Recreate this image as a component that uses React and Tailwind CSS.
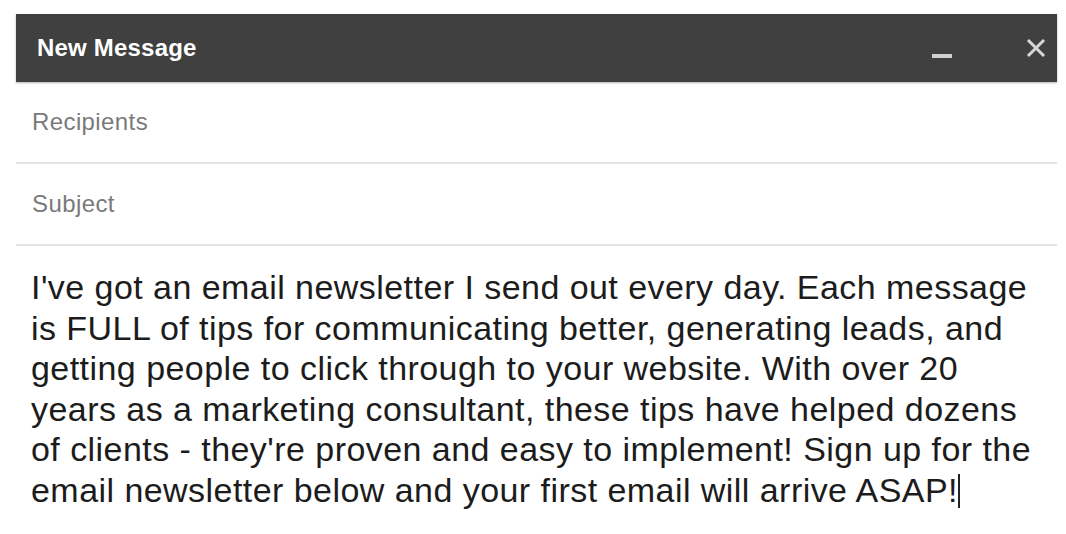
const lines = [
  "I've got an email newsletter I send out every day. Each message",
  "is FULL of tips for communicating better, generating leads, and",
  "getting people to click through to your website. With over 20",
  "years as a marketing consultant, these tips have helped dozens",
  "of clients - they're proven and easy to implement! Sign up for the",
  "email newsletter below and your first email will arrive ASAP!",
];

export default function App() {
  return (
    <div className="w-[1066px] h-[534px] bg-white pt-[14px] px-[16px] font-['Liberation_Sans',Arial,sans-serif] overflow-hidden">
      <div className="w-[1041px]">
        {/* title bar */}
        <div className="h-[68px] bg-[#404040] flex items-center pl-[21px] pr-[11px] shadow-[0_1px_2px_rgba(0,0,0,0.3)]">
          <span className="text-white font-bold text-[24px] tracking-[0.2px] flex-1">New Message</span>
          <div className="w-[20px] h-[4px] bg-[#d0d0d0] mt-[16px] mr-[74px]" />
          <svg width="20" height="20" viewBox="0 0 20 20">
            <path d="M3 3 L17 17 M17 3 L3 17" stroke="#d6d6d6" strokeWidth="3" strokeLinecap="square" />
          </svg>
        </div>

        <div className="h-[82px] flex items-center pl-[16px] border-b-2 border-[#e3e3e3]">
          <span className="text-[24px] tracking-[0.4px] text-[#7a7a7a]">Recipients</span>
        </div>
        <div className="h-[82px] flex items-center pl-[16px] border-b-2 border-[#e3e3e3]">
          <span className="text-[24px] tracking-[0.4px] text-[#7a7a7a]">Subject</span>
        </div>

        {/* message body, wrapped as in the compose box */}
        <div className="pt-[21px] pl-[15px] text-[34px] tracking-[0.45px] leading-[40.6px] text-[#1c1c1c] whitespace-nowrap">
          {lines.map((line, i) => (
            <div key={i}>
              {line}
              {i === lines.length - 1 && (
                <span className="inline-block w-[2px] h-[34px] bg-[#222] align-[-6px]" />
              )}
            </div>
          ))}
        </div>
      </div>
    </div>
  );
}
